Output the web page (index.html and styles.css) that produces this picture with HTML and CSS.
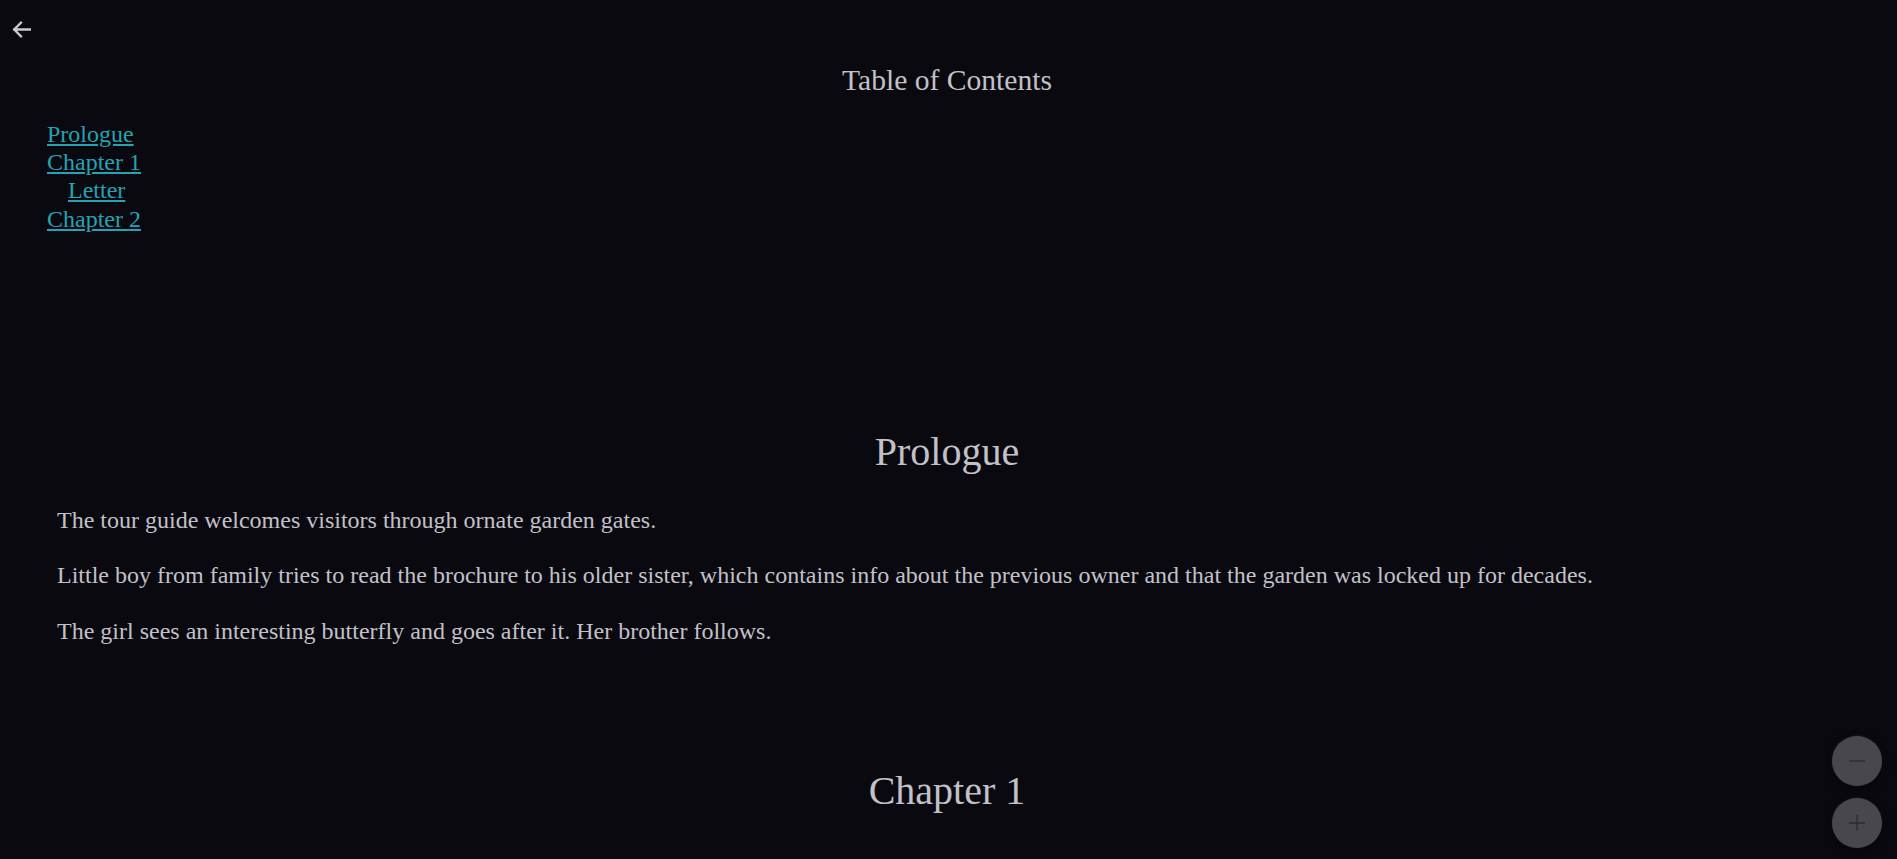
FILE: index.html
```html
<!DOCTYPE html>
<html lang="en">
<head>
<meta charset="utf-8">
<title>Table of Contents</title>
<link rel="stylesheet" href="styles.css">
</head>
<body>
<header class="topbar">
  <a class="back" href="#" aria-label="Back">
    <svg viewBox="0 0 24 24" width="25" height="25" aria-hidden="true">
      <path d="M20 12H5M11.5 5.5 5 12l6.5 6.5" fill="none" stroke="currentColor" stroke-width="2.2" stroke-linecap="square"/>
    </svg>
  </a>
</header>
<main class="content">
  <section class="toc">
    <h1 class="toc-title">Table of Contents</h1>
    <ul class="toc-list">
      <li><a href="#prologue">Prologue</a></li>
      <li><a href="#chapter-1">Chapter 1</a>
        <ul class="toc-sub">
          <li><a href="#letter">Letter</a></li>
        </ul>
      </li>
      <li><a href="#chapter-2">Chapter 2</a></li>
    </ul>
  </section>
  <section class="chapter" id="prologue">
    <h2 class="chapter-title">Prologue</h2>
    <p>The tour guide welcomes visitors through ornate garden gates.</p>
    <p>Little boy from family tries to read the brochure to his older sister, which contains info about the previous owner and that the garden was locked up for decades.</p>
    <p>The girl sees an interesting butterfly and goes after it. Her brother follows.</p>
  </section>
  <section class="chapter" id="chapter-1">
    <h2 class="chapter-title">Chapter 1</h2>
  </section>
  <section class="chapter" id="letter">
    <h2 class="chapter-title">Letter</h2>
  </section>
  <section class="chapter" id="chapter-2">
    <h2 class="chapter-title">Chapter 2</h2>
  </section>
</main>
<div class="zoom-controls">
  <button class="zoom-btn" aria-label="Zoom out">
    <svg viewBox="0 0 20 20" width="20" height="20" aria-hidden="true"><path d="M2 10h16" stroke="currentColor" stroke-width="1.4" fill="none"/></svg>
  </button>
  <button class="zoom-btn" aria-label="Zoom in">
    <svg viewBox="0 0 20 20" width="20" height="20" aria-hidden="true"><path d="M2 10h16M10 2v16" stroke="currentColor" stroke-width="1.4" fill="none"/></svg>
  </button>
</div>
</body>
</html>
```

FILE: styles.css
```css
html, body {
  margin: 0;
  padding: 0;
  background: #0a0910;
}

body {
  font-family: "Liberation Serif", "Times New Roman", serif;
  color: #c2c1c8;
  font-size: 24px;
}

.topbar {
  height: 56px;
  display: flex;
  align-items: center;
  padding-left: 9px;
}

.back {
  display: flex;
  margin-top: 2px;
  color: #c9c9d0;
}

.content {
  padding: 0 50px 0 47px;
}

.toc {
  margin-bottom: 98.8px;
}

.toc-title {
  margin: 8px 0 23px;
  font-size: 29.6px;
  font-weight: normal;
  text-align: center;
  line-height: normal;
}

.toc-list {
  list-style: none;
  margin: 0;
  padding: 0;
  line-height: 28.2px;
}

.toc-sub {
  list-style: none;
  margin: 0;
  padding: 0 0 0 21px;
}

.toc-list a {
  color: #25a3b3;
  text-decoration: underline;
  text-underline-offset: 2px;
}

.chapter {
  padding-top: 93.8px;
}

.toc + .chapter {
  padding-top: 96px;
}

.chapter-title {
  margin: 0 0 32px;
  font-size: 40px;
  font-weight: normal;
  text-align: center;
  line-height: normal;
}

.chapter p {
  margin: 0 0 28.6px;
  padding-left: 10px;
  line-height: normal;
}

.zoom-controls {
  position: fixed;
  right: 15px;
  bottom: 11px;
  display: flex;
  flex-direction: column;
  gap: 12px;
}

.zoom-btn {
  width: 50px;
  height: 50px;
  border-radius: 50%;
  border: none;
  padding: 0;
  background: #48474e;
  color: #2e2d33;
  display: flex;
  align-items: center;
  justify-content: center;
  box-shadow: 0 2px 6px rgba(0, 0, 0, 0.7), 0 0 2px rgba(120, 120, 130, 0.4);
}
```
